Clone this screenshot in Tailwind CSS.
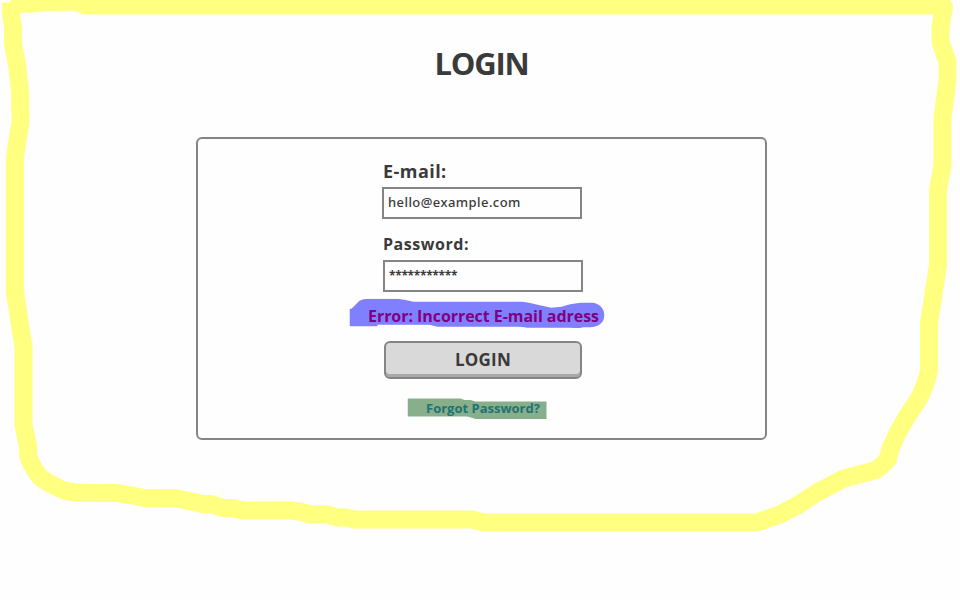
<!DOCTYPE html>
<html lang="en">
<head>
<meta charset="utf-8">
<title>Login</title>
<script src="https://cdn.jsdelivr.net/npm/@tailwindcss/browser@4"></script>
</head>
<body class="relative w-[960px] h-[600px] overflow-hidden bg-[#fefefe] font-['Open_Sans','Noto_Sans',sans-serif] text-[#3a3a3a]">
<!-- Yellow marker outline -->
<svg class="absolute inset-0" width="960" height="600" viewBox="0 0 960 600" fill="none" stroke="#ffff80" stroke-width="18" stroke-linejoin="round">
<path d="M10.5 4.5L32 3.5L45 2L75 1.5L85 5.5H944"/>
<path d="M11 2.5V14L13 27V43L17 65L20 90L20.500 122L18 137L15 157V293L23.500 347V425L28 446V455Q31 466 40 477Q50 485 66 491L75 492.500L92 493H118L145 498H175L203 504H211L223 508H234L242 510.500H290Q301 511 310 514.500H328L337 517.500H346L354 519.500H472L484 522.500H757L781 514L798 505L817 492.500L843 479Q848 477 853 476L875 470.500Q881 467 888 459L890 450L898 432L908 415L918 400Q926 386 929 370V323L938 265V190L942.500 165V118L947.500 80V62L940.500 42V27L944 7"/>
<circle cx="944" cy="7" r="9" fill="#ffff80" stroke="none"/>
</svg>
<main class="relative flex flex-col items-center pt-[40px] pl-[3px]">
<h1 class="h-[46px] leading-[46px] text-[31px] font-bold tracking-[-1.2px] whitespace-nowrap">LOGIN</h1>
<form class="mt-[51px] w-[571px] h-[303px] rounded-[6px] border-2 border-[#858585]">
<div class="flex flex-col items-start ml-[184px] w-[201px]">
<label class="mt-[18px] ml-[1px] h-[28px] leading-[28px] text-[18px] font-bold tracking-[0.45px] whitespace-nowrap">E-mail:</label>
<div class="mt-[2px] w-[200px] h-[32px] border-2 border-[#858585] pl-[4px] leading-[27px] font-['Noto_Sans',sans-serif] text-[13px] font-medium tracking-[0.43px] whitespace-nowrap">hello@example.com</div>
<label class="mt-[12px] ml-[1px] h-[26px] leading-[26px] text-[16px] font-bold tracking-[0.55px] whitespace-nowrap">Password:</label>
<div class="mt-[3px] ml-[1px] w-[200px] h-[32px] border-2 border-[#858585] pl-[4px] leading-[27px] text-[12px] font-bold tracking-[-0.35px] whitespace-nowrap">***********</div>
</div>
<div class="relative ml-[151px] mt-[6px] w-[256px] h-[31px]">
<svg class="absolute inset-0 translate-y-[0.7px] translate-x-[0.5px]" width="256" height="31" viewBox="0 0 256 31" fill="#8080ff"><path d="M0 10H2L10 2Q14 0 18 0H48Q56 1 64 3H173Q181 4 188 6L202 9L212 8Q220 5 231 4H244Q252 6 254 12Q256 18 253 23Q249 28 241 28.500H234Q228 30 221 29H178Q173 28 168 28H88L80 26H28V27.500H0Z"/></svg>
<span class="absolute left-[19px] top-[6px] leading-[24px] text-[16px] font-bold tracking-[-0.05px] text-[#80007f] whitespace-nowrap">Error: Incorrect E-mail adress</span>
</div>
<button type="button" class="block ml-[186px] mt-[12px] w-[198px] h-[38px] pb-[2px] rounded-[6px] border-2 border-[#858585] bg-[#d9d9d9] shadow-[inset_0_-3px_0_#a9a9a9] leading-[31px] text-[17px] font-bold tracking-[0.2px]">LOGIN</button>
<div class="relative ml-[209px] mt-[19px] w-[140px] h-[21px]">
<svg class="absolute inset-0 translate-x-[0.5px]" width="140" height="21" viewBox="0 0 140 21" fill="#87af8b"><path d="M0 .5H53L57 2H63L68 3.500H139V21H68L60 18.500H0Z"/></svg>
<a class="absolute left-[19px] top-0 leading-[20px] text-[13px] font-bold text-[#1f7373] whitespace-nowrap">Forgot Password?</a>
</div>
</form>
</main>
</body>
</html>
